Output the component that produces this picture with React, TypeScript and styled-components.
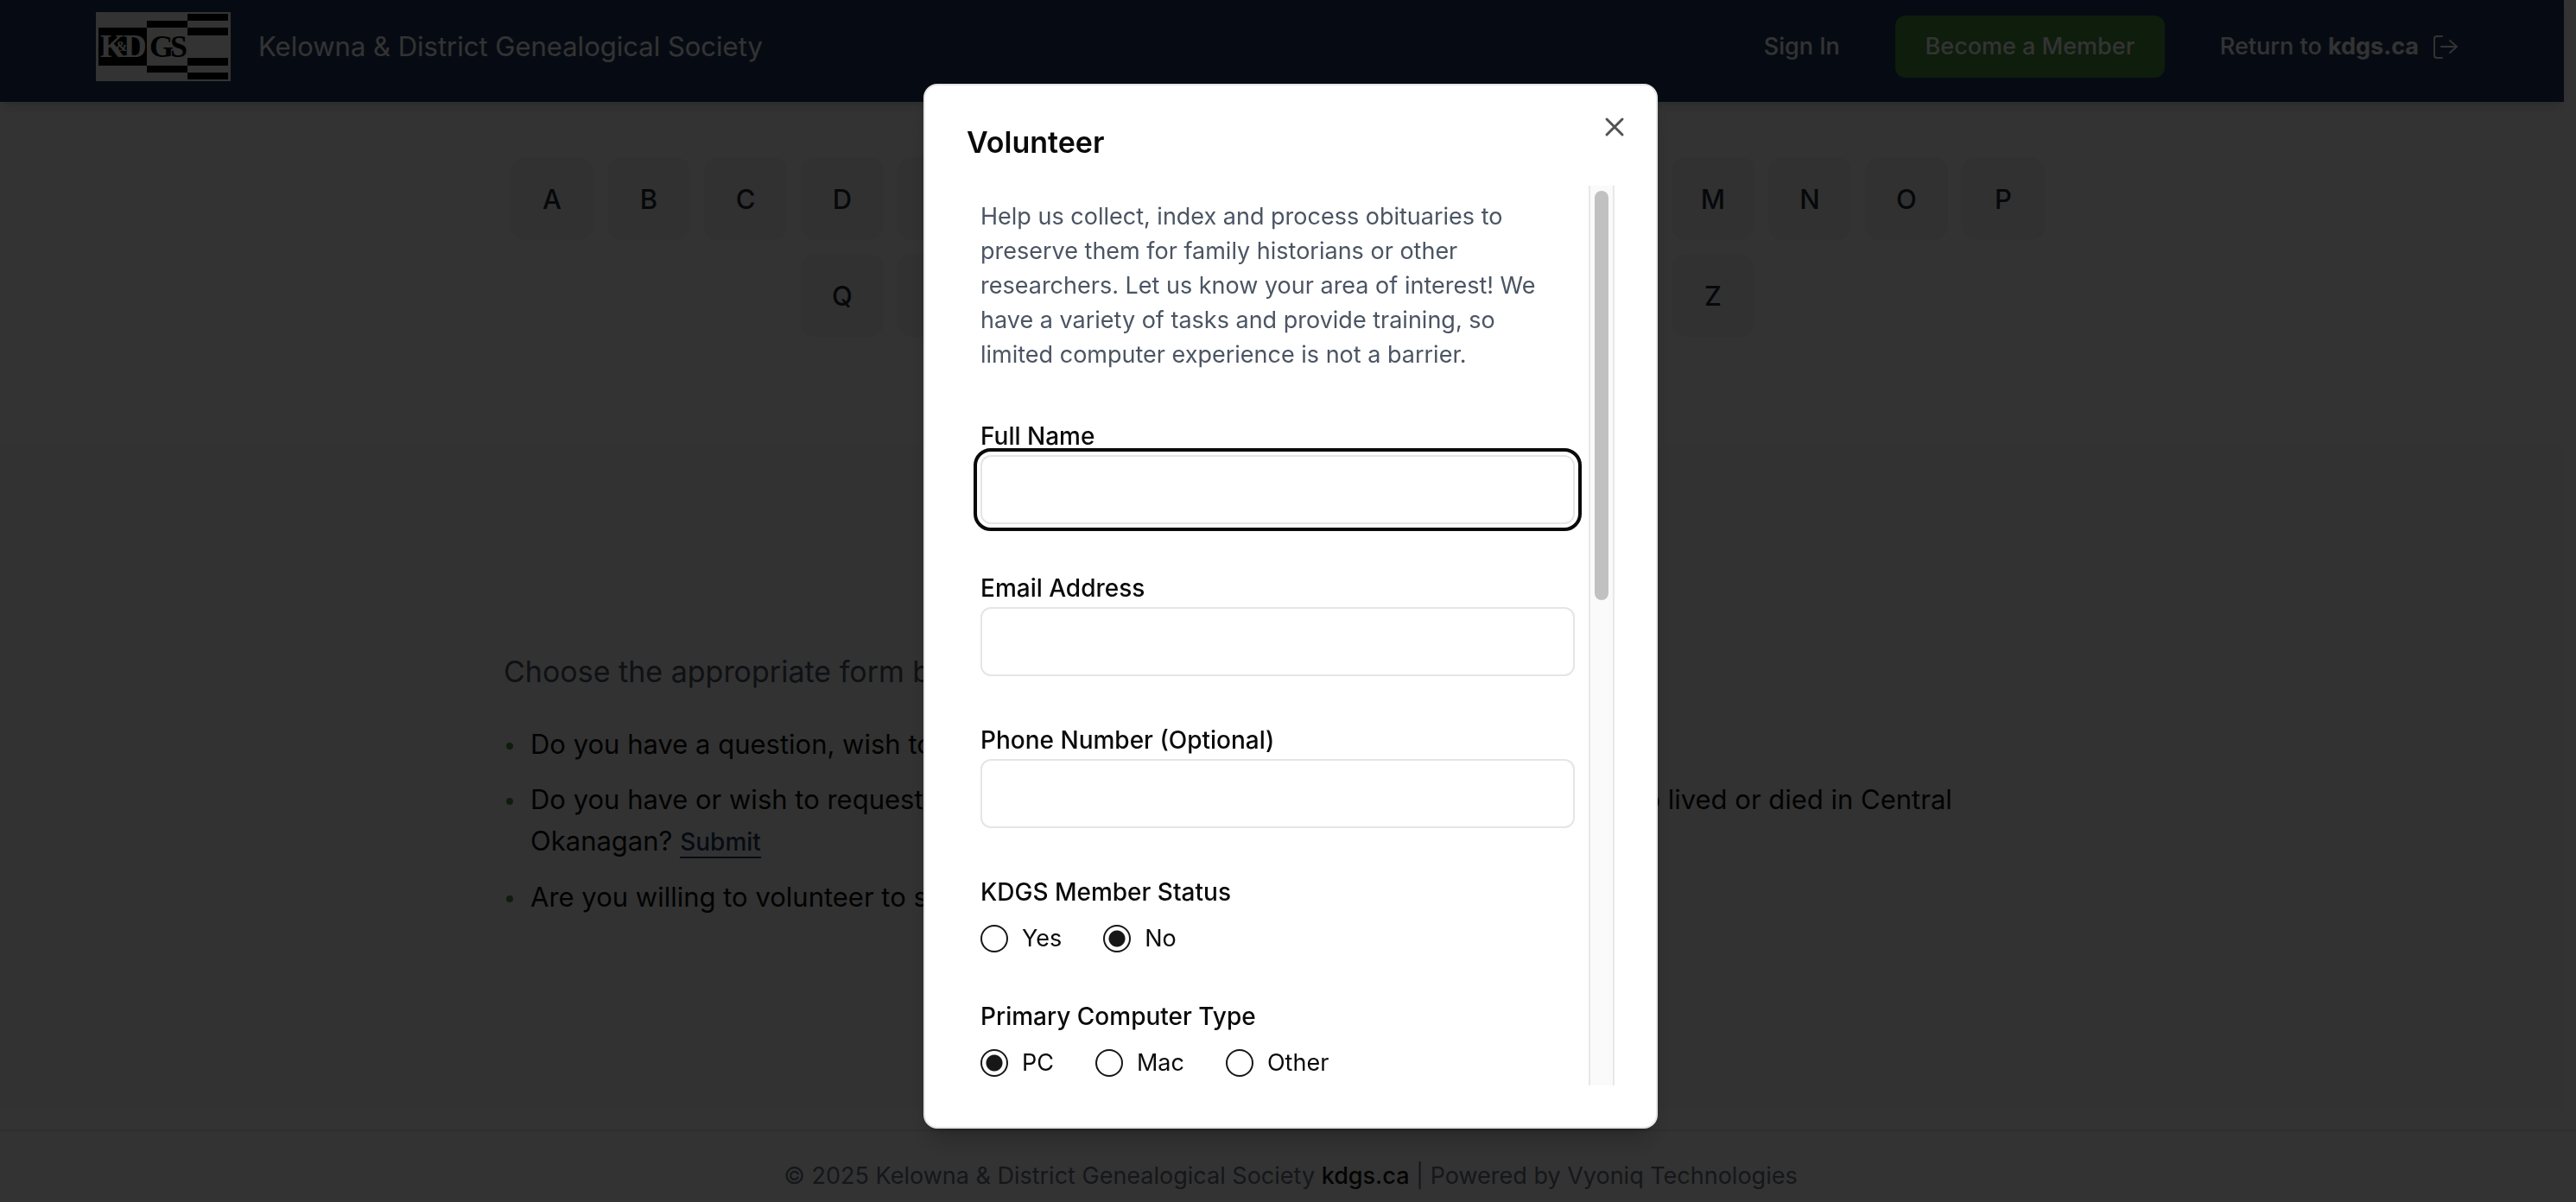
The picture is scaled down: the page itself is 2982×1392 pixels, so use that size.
import React from "react";
import styled, { createGlobalStyle } from "styled-components";

const GlobalStyle = createGlobalStyle`
  *, *::before, *::after { box-sizing: border-box; }
  body {
    margin: 0;
    background: #ffffff;
    font-family: Inter, "Liberation Sans", sans-serif;
    color: #0a0a0a;
    overflow: hidden;
  }
  button, input { font: inherit; color: inherit; }
  a { color: inherit; text-decoration: none; }
`;

const Page = styled.div`
  display: flex;
  flex-direction: column;
  height: 100vh;
  overflow: hidden;
`;

const Header = styled.header`
  display: flex;
  align-items: center;
  justify-content: space-between;
  flex: none;
  height: 118px;
  margin-right: 14px;
  padding: 0 122px 10px 111px;
  background: #1e3a5f;
  color: #ffffff;
  box-shadow: 0 8px 12px -2px rgba(0, 0, 0, 0.1), 0 4px 8px -4px rgba(0, 0, 0, 0.1);
`;

const Brand = styled.a`
  display: flex;
  align-items: center;
  gap: 32px;
  font-size: 31px;
  line-height: 48px;
`;

const Logo = styled.svg`
  display: block;
  width: 156px;
  height: 80px;
`;

const Nav = styled.nav`
  display: flex;
  align-items: center;
  gap: 64px;
  font-size: 27px;
  font-weight: 500;
  line-height: 40px;
`;

const NavLink = styled.a`
  display: flex;
  align-items: center;
  gap: 16px;
`;

const JoinButton = styled.button`
  min-width: 312px;
  height: 72px;
  padding: 0 32px;
  border: 0;
  border-radius: 12px;
  background: #46913f;
  color: #ffffff;
`;

const Letters = styled.section`
  flex: none;
  padding: 64px 24px 126px 0;
`;

const LetterGrid = styled.div`
  display: flex;
  flex-wrap: wrap;
  justify-content: center;
  gap: 16px;
  max-width: 1792px;
  margin: 0 auto;
`;

const Letter = styled.button`
  width: 96px;
  height: 96px;
  border: 0;
  border-radius: 16px;
  background: #f3f4f6;
  color: #1e2939;
  font-size: 31px;
  font-weight: 500;
`;

const Contact = styled.section`
  flex: 1;
  margin: 0 14px 24px 0;
  padding: 234px 10px 0 0;
  background: #f9fafb;
`;

const ContactBody = styled.div`
  max-width: 1792px;
  margin: 0 auto;
`;

const Lead = styled.p`
  margin: 0 0 32px;
  color: #4b5563;
  font-size: 34px;
  line-height: 56px;
`;

const Questions = styled.ul`
  display: flex;
  flex-direction: column;
  gap: 16px;
  margin: 0;
  padding: 0;
  list-style: none;
  font-size: 31px;
  line-height: 48px;
`;

const Question = styled.li`
  display: flex;
  gap: 20px;

  &::before {
    content: "";
    flex: none;
    width: 8px;
    height: 8px;
    margin: 22px 0 0 3px;
    border-radius: 50%;
    background: #46913f;
  }
`;

const SubmitLink = styled.a`
  border-bottom: 2px solid #1e3a5f;
  color: #1e3a5f;
  font-size: 28px;
  font-weight: 500;
`;

const Footer = styled.footer`
  flex: none;
  height: 84px;
  padding: 28px 0 0 6px;
  border-top: 2px solid #e5e7eb;
  color: #6b7280;
  font-size: 27px;
  line-height: 48px;
  text-align: center;
`;

const FooterLink = styled.a`
  color: #171717;
  font-weight: 500;
`;

const Overlay = styled.div`
  position: fixed;
  inset: 0;
  display: flex;
  align-items: center;
  justify-content: center;
  padding: 12px 0 0 6px;
  background: rgba(0, 0, 0, 0.8);
`;

const Dialog = styled.div`
  position: relative;
  display: flex;
  flex-direction: column;
  gap: 32px;
  width: 850px;
  max-height: calc(100% - 160px);
  padding: 48px;
  border: 2px solid #e5e5e5;
  border-radius: 16px;
  background: #ffffff;
  box-shadow: 0 20px 30px -6px rgba(0, 0, 0, 0.2), 0 8px 12px -8px rgba(0, 0, 0, 0.2);
`;

const DialogTitle = styled.h2`
  margin: 0;
  font-size: 34px;
  font-weight: 600;
  line-height: 36px;
`;

const CloseButton = styled.button`
  position: absolute;
  top: 32px;
  right: 32px;
  display: flex;
  padding: 0;
  border: 0;
  background: none;
  color: #525252;
`;

const ScrollArea = styled.div`
  display: flex;
  justify-content: space-between;
  min-height: 0;
`;

const Form = styled.form`
  flex: 1;
  height: 1042px;
  padding: 16px 16px 0;
  overflow: hidden;
`;

const Track = styled.div`
  flex: none;
  width: 30px;
  padding: 6px 5px;
  border: solid #e8e8e8;
  border-width: 0 2px;
  background: #fafafa;
`;

const Thumb = styled.div`
  width: 16px;
  height: 474px;
  border-radius: 8px;
  background: #c1c1c1;
`;

const Intro = styled.p`
  margin: 0 0 58px;
  padding-right: 24px;
  color: #4b5563;
  font-size: 27px;
  line-height: 40px;
`;

const Field = styled.div`
  display: flex;
  flex-direction: column;
  gap: 6px;
  margin-bottom: 58px;
`;

const Label = styled.label`
  font-size: 28px;
  font-weight: 500;
  line-height: 32px;
`;

const TextInput = styled.input`
  height: 80px;
  padding: 0 24px;
  border: 2px solid #e5e5e5;
  border-radius: 12px;
  background: #ffffff;

  &:focus {
    outline: 4px solid #0a0a0a;
    outline-offset: 4px;
  }
`;

const Group = styled.fieldset`
  margin: 0 0 54px;
  padding: 0;
  border: 0;
`;

const Legend = styled.legend`
  padding: 0;
  font-size: 28px;
  font-weight: 500;
  line-height: 32px;
`;

const Options = styled.div`
  display: flex;
  gap: 48px;
  padding-top: 18px;
`;

const Option = styled.label`
  display: flex;
  align-items: center;
  gap: 16px;
  font-size: 27px;
  line-height: 40px;
`;

const Radio = styled.input`
  appearance: none;
  width: 32px;
  height: 32px;
  margin: 0;
  border: 2px solid #171717;
  border-radius: 50%;

  &:checked {
    background: radial-gradient(circle, #171717 9px, transparent 10px);
  }
`;

const alphabet = "ABCDEFGHIJKLMNOPQRSTUVWXYZ".split("");

function KdgsLogo() {
  return (
    <Logo viewBox="0 0 156 80" role="img" aria-label="KDGS">
      <rect width="156" height="80" fill="#fff" />
      <path
        d="M3 18h56v44H3zM59 10h47v8H59zM59 62h47v8H59zM106 2h47v8h-47zM106 18h47v9h-47zM106 53h47v9h-47zM106 70h47v8h-47z"
        fill="#000"
      />
      <g fontFamily="'Liberation Serif', serif" fontWeight="700">
        <text x="5" y="52" fontSize="37" fill="#fff">K</text>
        <text x="23" y="45" fontSize="16" fill="#fff">&amp;</text>
        <text x="32" y="52" fontSize="37" fill="#fff">D</text>
        <text x="62" y="52" fontSize="36" fill="#000">G</text>
        <text x="86" y="52" fontSize="36" fill="#000">S</text>
      </g>
    </Logo>
  );
}

function ExitIcon() {
  return (
    <svg width="30" height="30" viewBox="0 0 30 30" fill="none" stroke="currentColor" strokeWidth="2" strokeLinecap="round" strokeLinejoin="round">
      <path d="M11 3H5a3 3 0 0 0-3 3v19a3 3 0 0 0 3 3h6M10 15h18M20 8l8 7-8 7" />
    </svg>
  );
}

function CloseIcon() {
  return (
    <svg width="32" height="32" viewBox="0 0 32 32" fill="none" stroke="currentColor" strokeWidth="3" strokeLinecap="round">
      <path d="M7 7l18 18M25 7L7 25" />
    </svg>
  );
}

function RadioGroup({ name, legend, options, selected }: { name: string; legend: string; options: string[]; selected: string }) {
  return (
    <Group>
      <Legend>{legend}</Legend>
      <Options>
        {options.map((option) => (
          <Option key={option}>
            <Radio type="radio" name={name} value={option} defaultChecked={option === selected} />
            {option}
          </Option>
        ))}
      </Options>
    </Group>
  );
}

export default function App() {
  return (
    <>
      <GlobalStyle />
      <Page>
        <Header>
          <Brand href="#">
            <KdgsLogo />
            Kelowna &amp; District Genealogical Society
          </Brand>
          <Nav>
            <NavLink href="#signin">Sign In</NavLink>
            <JoinButton type="button">Become a Member</JoinButton>
            <NavLink href="#home">
              <span>Return to <b>kdgs.ca</b></span>
              <ExitIcon />
            </NavLink>
          </Nav>
        </Header>
        <Letters>
          <LetterGrid>
            {alphabet.map((letter) => (
              <Letter key={letter} type="button">{letter}</Letter>
            ))}
          </LetterGrid>
        </Letters>
        <Contact>
          <ContactBody>
            <Lead>Choose the appropriate form below</Lead>
            <Questions>
              <Question>
                <span>Do you have a question, wish to comment?</span>
              </Question>
              <Question>
                <span>
                  Do you have or wish to request an article or photograph of a headstone for someone who lived or died in Central
                  Okanagan? <SubmitLink href="#submit">Submit</SubmitLink>
                </span>
              </Question>
              <Question>
                <span>Are you willing to volunteer to serve?</span>
              </Question>
            </Questions>
          </ContactBody>
        </Contact>
        <Footer>
          © 2025 Kelowna &amp; District Genealogical Society <FooterLink href="#home">kdgs.ca</FooterLink> | Powered by Vyoniq Technologies
        </Footer>
      </Page>
      <Overlay>
        <Dialog role="dialog" aria-modal="true" aria-labelledby="dialog-title">
          <DialogTitle id="dialog-title">Volunteer</DialogTitle>
          <CloseButton type="button" aria-label="Close"><CloseIcon /></CloseButton>
          <ScrollArea>
            <Form>
              <Intro>
                Help us collect, index and process obituaries to preserve them for family historians or other researchers. Let us
                know your area of interest! We have a variety of tasks and provide training, so limited computer experience is not
                a barrier.
              </Intro>
              <Field>
                <Label htmlFor="name">Full Name</Label>
                <TextInput id="name" type="text" autoFocus />
              </Field>
              <Field>
                <Label htmlFor="email">Email Address</Label>
                <TextInput id="email" type="email" />
              </Field>
              <Field>
                <Label htmlFor="phone">Phone Number (Optional)</Label>
                <TextInput id="phone" type="tel" />
              </Field>
              <RadioGroup name="member" legend="KDGS Member Status" options={["Yes", "No"]} selected="No" />
              <RadioGroup name="computer" legend="Primary Computer Type" options={["PC", "Mac", "Other"]} selected="PC" />
            </Form>
            <Track><Thumb /></Track>
          </ScrollArea>
        </Dialog>
      </Overlay>
    </>
  );
}
